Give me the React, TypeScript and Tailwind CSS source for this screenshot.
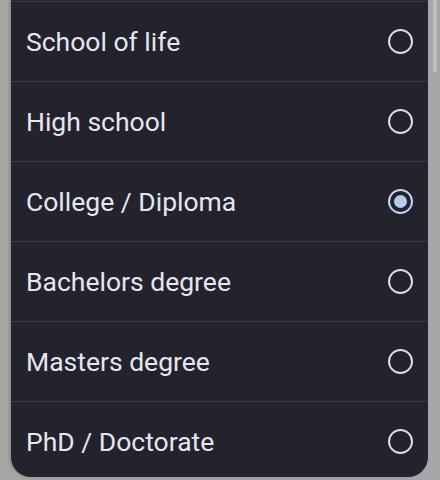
const options = [
  { label: "School of life", selected: false },
  { label: "High school", selected: false },
  { label: "College / Diploma", selected: true },
  { label: "Bachelors degree", selected: false },
  { label: "Masters degree", selected: false },
  { label: "PhD / Doctorate", selected: false },
]

function Radio({ selected }: { selected: boolean }) {
  if (selected) {
    return (
      <div className="w-[25px] h-[25px] rounded-full border-2 border-[#c3d3f3] flex items-center justify-center">
        <div className="w-[13px] h-[13px] rounded-full bg-[#b7c9ef]" />
      </div>
    )
  }
  return <div className="w-[25px] h-[25px] rounded-full border-2 border-[#dedee6]" />
}

export default function App() {
  return (
    <div className="w-[440px] h-[480px] bg-[#a6a6a6] flex pl-[11px] overflow-hidden font-['Roboto',sans-serif]">
      <div className="w-[417px] h-[477px] bg-[#23232d] rounded-b-[20px] overflow-hidden pt-[1px] shadow-[-2px_0_3px_rgba(0,0,0,0.15)]">
        {options.map((o) => (
          <div
            key={o.label}
            className="h-[80px] border-t border-[#3a3a44] flex items-center justify-between pl-[15px] pr-[15px]"
          >
            <span className="text-[26.5px] leading-none text-[#e6e6ee] pt-[2px]">{o.label}</span>
            <Radio selected={o.selected} />
          </div>
        ))}
      </div>
      <div className="flex-1 flex justify-center">
        <div className="w-[4px] h-[72px] bg-[#bdbdbd] ml-[1px]" />
      </div>
    </div>
  )
}
